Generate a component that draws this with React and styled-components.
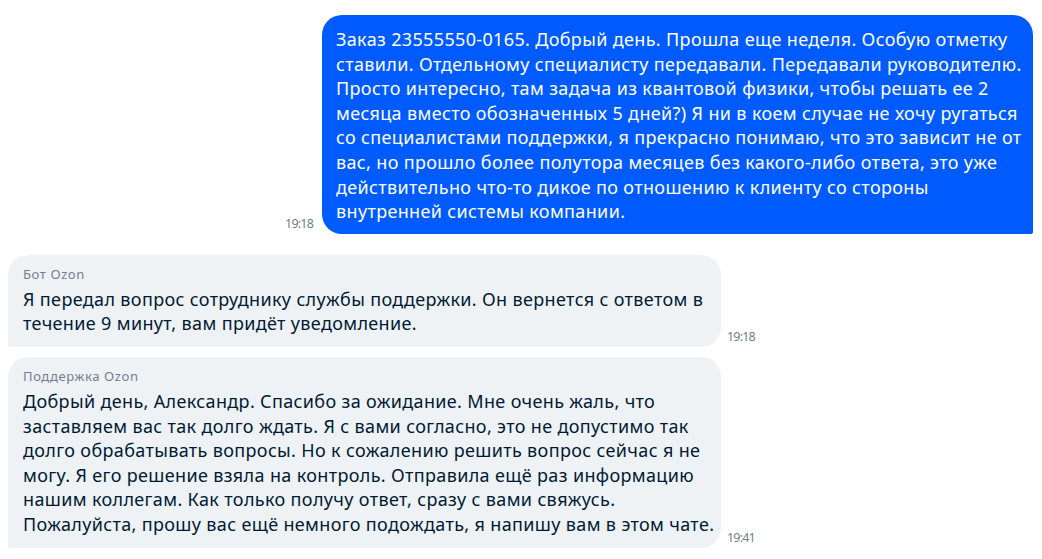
import React from 'react';
import styled, { createGlobalStyle } from 'styled-components';

const GlobalStyle = createGlobalStyle`
    body {
        margin: 0;
        background: #ffffff;
        font-family: "Noto Sans", "Open Sans", sans-serif;
        color: #001a34;
    }
`

const Chat = styled.div`
    display: flex;
    flex-direction: column;
    padding: 15px 9px 0 8px;
`

// own messages go on the right, time on the left of the bubble
const Row = styled.div`
    display: flex;
    align-items: flex-end;
    flex-direction: ${props => props.mine ? 'row-reverse' : 'row'};
    justify-content: flex-start;
    gap: ${props => props.mine ? '9px' : '6px'};
    margin-top: ${props => props.space || 0}px;
`

const Bubble = styled.div`
    width: ${props => props.mine ? '711px' : '713px'};
    box-sizing: border-box;
    padding: ${props => props.mine ? '12px 14px 10px' : '11px 15px 11px'};
    background: ${props => props.mine ? '#005bff' : '#eff2f5'};
    color: ${props => props.mine ? '#ffffff' : '#001a34'};
    border-radius: ${props => props.mine ? '20px 20px 2px 20px' : '20px 20px 20px 2px'};
`

const Author = styled.div`
    font-size: 13px;
    line-height: 16px;
    letter-spacing: 0.6px;
    color: #707f8d;
    margin-bottom: 5px;
`

const Line = styled.div`
    font-size: 18px;
    line-height: 24.6px;
    letter-spacing: 0.35px;
    white-space: nowrap;
`

const Time = styled.div`
    font-size: 12.5px;
    line-height: 16px;
    letter-spacing: -0.8px;
    color: #707f8d;
    margin-bottom: 2px;
    flex-shrink: 0;
`

const messages = [
    {
        mine: true,
        time: '19:18',
        space: 0,
        lines: [
            'Заказ 23555550-0165. Добрый день. Прошла еще неделя. Особую отметку',
            'ставили. Отдельному специалисту передавали. Передавали руководителю.',
            'Просто интересно, там задача из квантовой физики, чтобы решать ее 2',
            'месяца вместо обозначенных 5 дней?) Я ни в коем случае не хочу ругаться',
            'со специалистами поддержки, я прекрасно понимаю, что это зависит не от',
            'вас, но прошло более полутора месяцев без какого-либо ответа, это уже',
            'действительно что-то дикое по отношению к клиенту со стороны',
            'внутренней системы компании.',
        ],
    },
    {
        author: 'Бот Ozon',
        time: '19:18',
        space: 21,
        lines: [
            'Я передал вопрос сотруднику службы поддержки. Он вернется с ответом в',
            'течение 9 минут, вам придёт уведомление.',
        ],
    },
    {
        author: 'Поддержка Ozon',
        time: '19:41',
        space: 10,
        lines: [
            'Добрый день, Александр. Спасибо за ожидание. Мне очень жаль, что',
            'заставляем вас так долго ждать. Я с вами согласно, это не допустимо так',
            'долго обрабатывать вопросы. Но к сожалению решить вопрос сейчас я не',
            'могу. Я его решение взяла на контроль. Отправила ещё раз информацию',
            'нашим коллегам. Как только получу ответ, сразу с вами свяжусь.',
            'Пожалуйста, прошу вас ещё немного подождать, я напишу вам в этом чате.',
        ],
    },
]

export default function App() {
    return (
        <>
            <GlobalStyle />
            <Chat>
                {messages.map((msg, i) => (
                    <Row key={i} mine={msg.mine} space={msg.space}>
                        <Bubble mine={msg.mine}>
                            {msg.author && <Author>{msg.author}</Author>}
                            {msg.lines.map((line, j) => (
                                <Line key={j}>{line}</Line>
                            ))}
                        </Bubble>
                        <Time>{msg.time}</Time>
                    </Row>
                ))}
            </Chat>
        </>
    )
}
